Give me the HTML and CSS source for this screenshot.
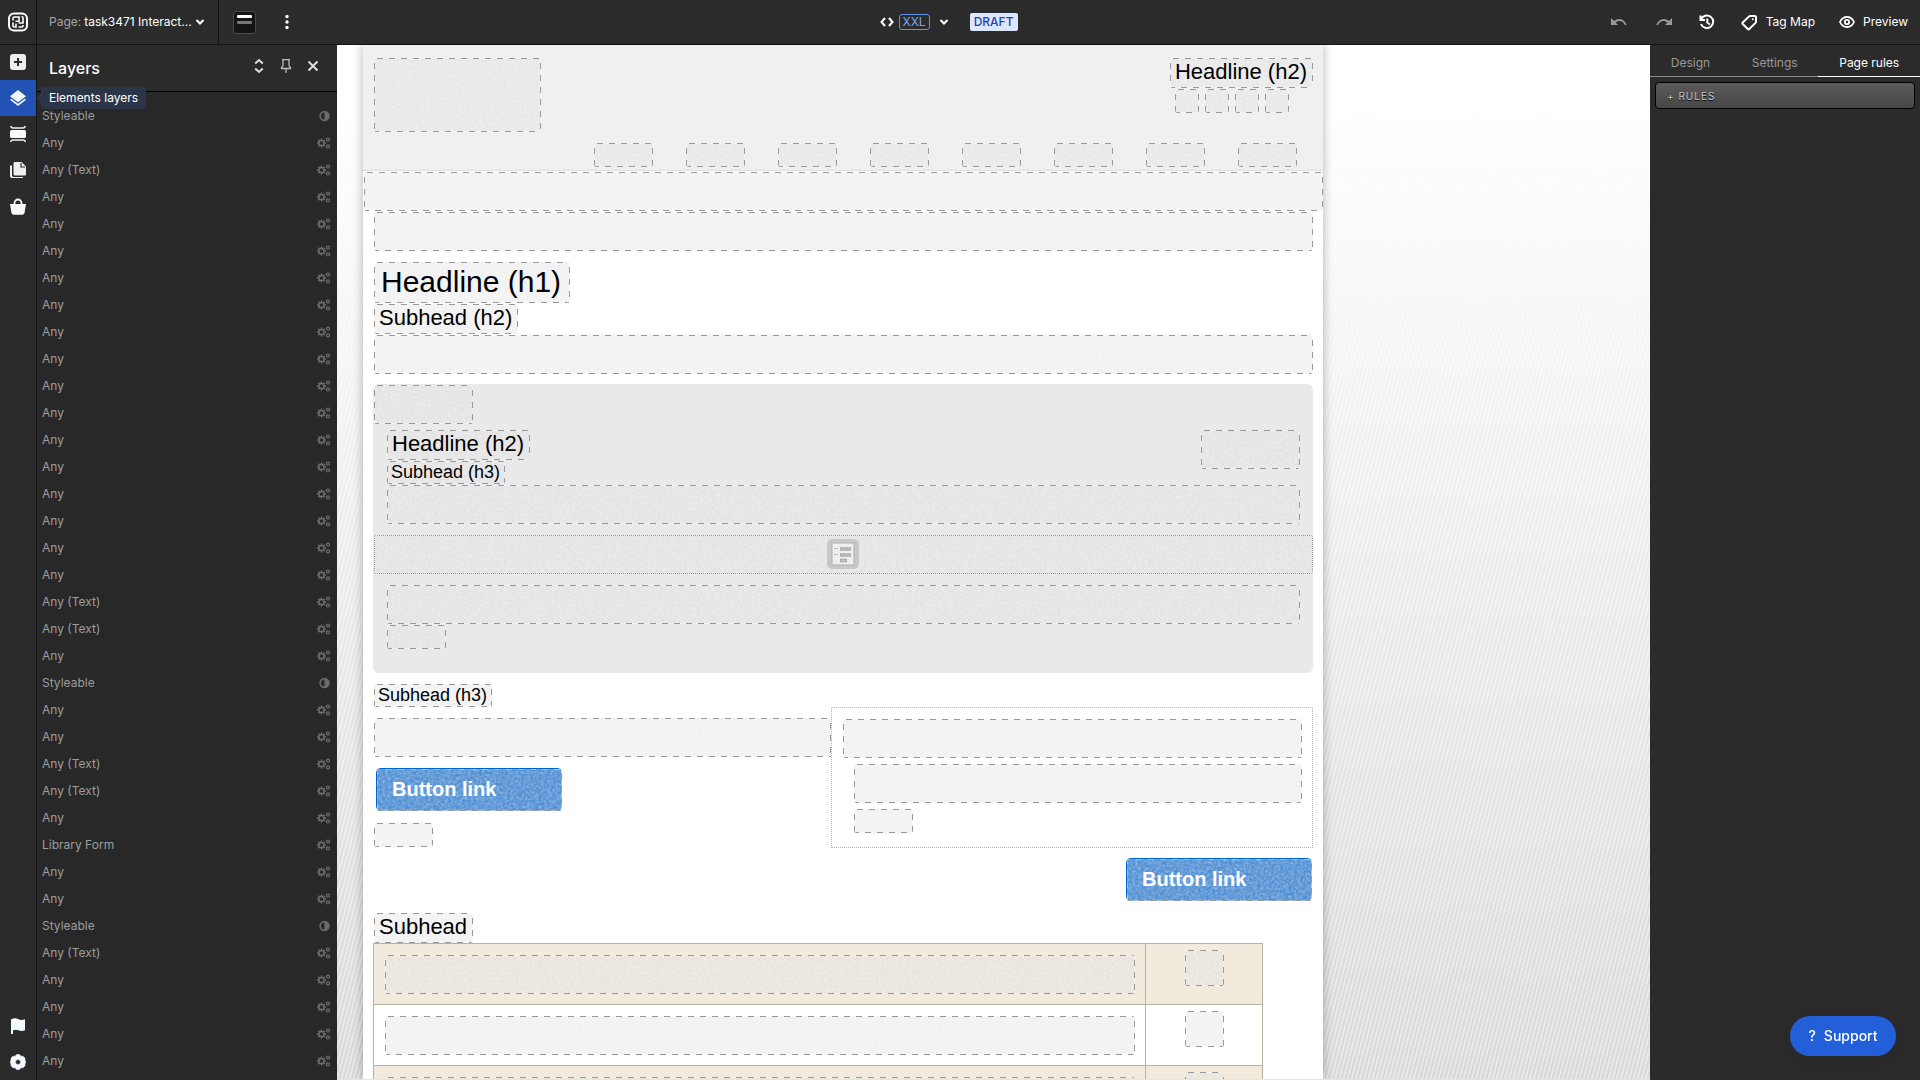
FILE: index.html
```
<!doctype html>
<html lang="en">
<head>
<meta charset="utf-8">
<title>Page editor</title>
<link rel="stylesheet" href="styles.css">
<script src="script.js" defer></script>
</head>

<body>
<svg class="sprite" aria-hidden="true">
	<symbol id="gears" viewBox="0 0 14 12">
		<circle cx="4.5" cy="6" r="2.6" fill="none" stroke="currentColor" stroke-width="1.5"/>
		<path d="M4.5 1.6v1.6M4.5 8.8v1.6M0 6h1.8M7.2 6h1.8M1.3 2.8l1.2 1.2M6.5 8l1.2 1.2M1.3 9.2L2.5 8M6.5 4l1.2-1.2" stroke="currentColor" stroke-width="1.5"/>
		<circle cx="11" cy="2.6" r="1.5" fill="none" stroke="currentColor" stroke-width="1.2"/>
		<circle cx="11" cy="9.4" r="1.5" fill="none" stroke="currentColor" stroke-width="1.2"/>
		<path d="M9 1.4l.8.5M13 1.4l-.8.5M9 3.8l.8-.5M13 3.8l-.8-.5M9 8.2l.8.5M13 8.2l-.8.5M9 10.6l.8-.5M13 10.6l-.8-.5" stroke="currentColor"/>
	</symbol>
	<symbol id="contrast" viewBox="0 0 14 12">
		<circle cx="7.5" cy="6" r="4.4" fill="none" stroke="currentColor" stroke-width="1.6"/>
		<path d="M7.5 1.6a4.4 4.4 0 0 1 0 8.8z" fill="currentColor"/>
	</symbol>
	<symbol id="chevron" viewBox="0 0 10 8">
		<path d="M1.5 2l3.5 3.5L8.500 2" fill="none" stroke="currentColor" stroke-width="2"/>
	</symbol>
</svg>

<header class="topbar">
	<div class="topLeft">
		<a href="#" class="logo" aria-label="Home">
			<svg width="20" height="20" viewBox="0 0 20 20" fill="none" stroke="#fff">
				<rect x="1" y="1.500" width="18" height="17" rx="5" stroke-width="2"/>
				<path d="M5 8.500V6.200C5 5.400 5.400 5 6.200 5H11v4.300H7.500M5 10.500v3.200c0 .9.400 1.300 1.300 1.300H8v-3.500M13.500 4.800h.5c.7 0 1 .4 1 1v5.200h-4.500M10.500 15h3.500c.7 0 1-.4 1-1v-1" stroke-width="1.600"/>
			</svg>
		</a>
		<button class="pageSelect">
			<span class="muted">Page:</span>
			<span class="pageName">task3471 Interact...</span>
			<svg width="10" height="8"><use href="#chevron"/></svg>
		</button>
		<button class="viewBtn" aria-label="Header view"><i class="on"></i><i></i></button>
		<button class="iconBtn dots" aria-label="More">
			<svg width="4" height="16" viewBox="0 0 4 16" fill="#fff"><circle cx="2" cy="2.500" r="1.700"/><circle cx="2" cy="8" r="1.700"/><circle cx="2" cy="13.500" r="1.700"/></svg>
		</button>
	</div>
	<div class="topMid">
		<svg width="14" height="10" viewBox="0 0 14 10" fill="none" stroke="#fff" stroke-width="2"><path d="M5 1L1.500 5 5 9M9 1l3.500 4L9 9"/></svg>
		<button class="sizeBtn"><span class="size">XXL</span><svg width="10" height="8"><use href="#chevron"/></svg></button>
		<span class="draft">DRAFT</span>
	</div>
	<div class="topRight">
		<button class="iconBtn undo" aria-label="Undo">
			<svg width="16" height="10" viewBox="0 0 16 10"><path d="M0 1v7h7L4.600 5.600C7.500 3 12 3.500 14 8.300l1.700-.6C13.200 1.500 7 .3 3.100 4.100z" fill="#999"/></svg>
		</button>
		<button class="iconBtn redo" aria-label="Redo">
			<svg width="16" height="10" viewBox="0 0 16 10"><path d="M16 1v7H9l2.400-2.400C8.500 3 4 3.500 2 8.300L.3 7.700C2.800 1.500 9 .3 12.900 4.100z" fill="#999"/></svg>
		</button>
		<button class="iconBtn history" aria-label="History">
			<svg width="16" height="16" viewBox="0 0 16 16" fill="none" stroke="#fff" stroke-width="2"><path d="M1.500 1.500V6H6M2 5.500A6.300 6.300 0 1 1 2 10M8.300 4.500v4l2.700 2"/></svg>
		</button>
		<button class="textBtn">
			<svg width="17" height="17" viewBox="0 0 17 17" fill="none" stroke="#fff" stroke-width="2" stroke-linejoin="round"><path d="M9.500 2h4.300c.8 0 1.200.4 1.200 1.200v4.600c0 .5-.2.8-.5 1.100L8.300 15c-.5.500-1 .5-1.500 0L1.700 10c-.5-.5-.5-1 0-1.500L8 2.500c.5-.4.900-.5 1.500-.5z"/><circle cx="11.800" cy="5.200" r="1" fill="#fff" stroke="none"/></svg>
			Tag Map
		</button>
		<button class="textBtn">
			<svg width="16" height="14" viewBox="0 0 16 14" fill="none" stroke="#fff" stroke-width="1.800"><path d="M1 7c1.500-3.300 4-5 7-5s5.500 1.700 7 5c-1.500 3.300-4 5-7 5s-5.500-1.700-7-5z"/><circle cx="8" cy="7" r="2.200"/></svg>
			Preview
		</button>
	</div>
</header>

<div class="work">
	<nav class="rail">
		<button aria-label="Add element">
			<svg width="16" height="16" viewBox="0 0 16 16"><rect width="16" height="16" rx="3" fill="#eee"/><path d="M8 4v8M4 8h8" stroke="#2b2b2b" stroke-width="2"/></svg>
		</button>
		<button class="active" aria-label="Elements layers">
			<svg width="18" height="18" viewBox="0 0 18 18" fill="#f2f6ff"><path d="M9 1l8 6.200-8 6.100-8-6.100z"/><path d="M2.300 9.700L9 14.800l6.700-5.100L17 10.800 9 17l-8-6.200z"/></svg>
			<span class="tip">Elements layers</span>
		</button>
		<button aria-label="Sections">
			<svg width="16" height="18" viewBox="0 0 16 18" fill="none" stroke="#f2f2f2"><rect y="5" width="16" height="8" rx="1.500" fill="#f8f8f8" stroke="none"/><path d="M.5 1c.5 1.600 1 2 2.500 2h10c1.500 0 2-.4 2.500-2M.5 17c.5-1.600 1-2 2.500-2h10c1.500 0 2 .4 2.500 2" stroke-width="1.500"/></svg>
		</button>
		<button aria-label="Pages">
			<svg width="16" height="18" viewBox="0 0 16 18" fill="#eee"><path d="M5 1h6.500L16 5.500V13c0 1-.6 1.500-1.500 1.500H5c-1 0-1.500-.6-1.500-1.500V2.500C3.500 1.600 4 1 5 1z"/><path d="M11 2v4h4" fill="none" stroke="#2b2b2b" stroke-width="1.200"/><path d="M0 4.500h2V14c0 1.200.8 2 2 2h9v1H2c-1.300 0-2-.7-2-2z"/></svg>
		</button>
		<button aria-label="Shop">
			<svg width="16" height="17" viewBox="0 0 16 17"><path d="M0 6h16l-1.400 8.600c-.3 1.400-1 2.100-2.300 2.100H3.700c-1.300 0-2-.7-2.300-2.100z" fill="#f8faff"/><path d="M4.500 8V5a3.500 3.500 0 0 1 7 0v3" fill="none" stroke="#f8faff" stroke-width="1.800"/></svg>
		</button>
		<span class="spacer"></span>
		<button aria-label="Report">
			<svg width="14" height="16" viewBox="0 0 14 16"><path d="M0 1.500C3 0 5 0 7.500 1.300c2 .9 4 .9 6.500 0v11c-2.500 1-4.500 1-6.500 0-2-.8-3.500-.8-5.500 0V16H0z" fill="#f4faff"/></svg>
		</button>
		<button aria-label="Settings">
			<svg width="16" height="16" viewBox="0 0 16 16" fill="#f4faff"><path fill-rule="evenodd" d="M6 1l2-1 2 1 .8 1.200 2.200 0L14.900 4l.1 2 .8 2-.8 2-.1 2-1.900 1.800-2.200 0L10 15l-2 1-2-1-.8-1.200-2.200 0L1.100 12 1 10 .2 8 1 6l.1-2L3 2.200l2.200 0zM8 5.500a2.500 2.500 0 1 0 0 5 2.500 2.500 0 0 0 0-5z" stroke="#f4faff" stroke-linejoin="round" stroke-width=".5"/></svg>
		</button>
	</nav>

	<aside class="layers">
		<div class="layersHead">
			<h2>Layers</h2>
			<button class="iconBtn" aria-label="Expand all">
				<svg width="10" height="16" viewBox="0 0 10 16" fill="none" stroke="#ddd" stroke-width="2"><path d="M1.200 5.500L5 2l3.800 3.500M1.200 10.500L5 14l3.800-3.500"/></svg>
			</button>
			<button class="iconBtn" aria-label="Pin">
				<svg width="12" height="14" viewBox="0 0 12 14" fill="none" stroke="#bbb"><path d="M2 .7h8M3 1v6M9 1v6M1.500 9.500v-1L3 7M10.500 9.500v-1L9 7M1 9.500h10M6 9.500V14" stroke-width="1.300"/></svg>
			</button>
			<button class="iconBtn" aria-label="Close">
				<svg width="12" height="12" viewBox="0 0 12 12" fill="none" stroke="#ddd" stroke-width="2"><path d="M1.500 1.500l9 9M10.500 1.500l-9 9"/></svg>
			</button>
		</div>
		<ul class="layerList" id="layerList"></ul>
	</aside>

	<main class="canvas">
		<div class="sheet">
			<div class="siteHead">
				<div class="brandRow">
					<div class="ph brand"></div>
					<div class="headRight">
						<h2 class="ph h2">Headline (h2)</h2>
						<div class="socials">
							<div class="ph"></div><div class="ph"></div><div class="ph"></div><div class="ph"></div>
						</div>
					</div>
				</div>
				<div class="menu">
					<div class="ph small"></div><div class="ph small"></div><div class="ph small"></div><div class="ph small"></div><div class="ph small"></div><div class="ph small"></div><div class="ph small"></div><div class="ph small"></div>
				</div>
			</div>
			<div class="ph bar wide"></div>
			<div class="content">
				<div class="ph bar"></div>
				<h1 class="ph h1">Headline (h1)</h1>
				<h2 class="ph h2">Subhead (h2)</h2>
				<div class="ph bar"></div>

				<section class="box">
					<div class="ph bar chip"></div>
					<div class="boxHead">
						<div class="titles">
							<h2 class="ph h2">Headline (h2)</h2>
							<h3 class="ph h3">Subhead (h3)</h3>
						</div>
						<div class="ph bar chip"></div>
					</div>
					<div class="ph bar inset"></div>
					<div class="ph bar formBar">
						<svg width="32" height="30" viewBox="0 0 32 30">
							<rect width="32" height="30" rx="5" fill="#c8c8c8"/>
							<rect x="5" y="4" width="22" height="22" fill="#eee" stroke="#b0b0b0"/>
							<path d="M7 9.500h4M7 15.500h4" stroke="#bbb"/>
							<path d="M13 10h11M13 16h11M13 21.500h7" stroke="#aaa" stroke-width="3.500"/>
							<path d="M14 10h9M14 16h9M14 21.500h5" stroke="#c6c6c6"/>
						</svg>
					</div>
					<div class="ph bar inset"></div>
					<div class="ph small inset"></div>
				</section>

				<h3 class="ph h3 after">Subhead (h3)</h3>
				<div class="cols">
					<div class="colLeft">
						<div class="ph bar"></div>
						<a href="#" class="btnLink"><span class="ph">Button link</span></a>
						<div class="ph small"></div>
					</div>
					<div class="colRight">
						<div class="ph bar"></div>
						<div class="ph bar sub"></div>
						<div class="ph small sub"></div>
					</div>
				</div>
				<a href="#" class="btnLink right"><span class="ph">Button link</span></a>
				<h2 class="ph h2">Subhead</h2>
				<table class="grid">
					<tr><td><div class="ph bar"></div></td><td class="thumb"><div class="ph"></div></td></tr>
					<tr><td><div class="ph bar"></div></td><td class="thumb"><div class="ph"></div></td></tr>
					<tr><td><div class="ph bar"></div></td><td class="thumb"><div class="ph"></div></td></tr>
				</table>
			</div>
		</div>
	</main>

	<aside class="side">
		<div class="tabs">
			<button>Design</button><button>Settings</button><button class="active">Page rules</button>
		</div>
		<button class="rules">+ RULES</button>
	</aside>
</div>

<button class="support"><span>?</span>Support</button>
</body>
</html>
```

FILE: styles.css
```
*{ box-sizing:border-box;}
body{ margin:0; height:100vh; overflow:hidden; display:flex; flex-direction:column; background:#2b2b2b; color:#fff; font:12px/16px Inter,"Liberation Sans",sans-serif;}
h1,h2,h3,ul{ margin:0; padding:0; font-weight:normal;}
button{ margin:0; padding:0; border:0; background:none; color:inherit; font:inherit; cursor:pointer;}
a{ color:inherit; text-decoration:none;}
svg{ display:block; flex:none;}
.sprite{ position:absolute; width:0; height:0;}

/* top bar */
.topbar{ position:relative; z-index:2; flex:none; display:flex; height:44px; background:#2b2b2b; box-shadow:0 1px #121212;}
.topLeft,.topMid,.topRight{ display:flex; align-items:center;}
.topLeft,.topRight{ flex:1;}
.logo{ display:flex; align-items:center; justify-content:center; width:37px; height:44px; border-right:1px solid #141414;}
.pageSelect{ display:flex; align-items:center; gap:3px; width:182px; height:44px; padding-left:12px; border-right:1px solid #141414; font-size:12px; white-space:nowrap;}
.muted{ color:#a5a5a5;}
.viewBtn{ display:flex; flex-direction:column; align-items:center; gap:3px; width:23px; height:23px; margin-left:14px; padding-top:3px; background:#141414; border:1px solid #4a4a4a; border-radius:3px;}
.viewBtn i{ width:15px; height:3px; border-radius:1px; background:#777;}
.viewBtn .on{ background:#fff;}
.iconBtn{ display:flex; align-items:center; justify-content:center; width:16px; height:24px;}
.dots{ margin-left:23px;}
.topMid{ gap:5px; padding-right:11px;}
.sizeBtn{ display:flex; align-items:center; gap:9px;}
.size{ padding:0 3px; border:1px solid #5f92f0; border-radius:3px; color:#7ba6f7; line-height:14px;}
.draft{ margin-left:16px; padding:0 4px; border-radius:2px; background:#dbe6ff; color:#1f45a5; font-weight:500; line-height:18px;}
.topRight{ justify-content:flex-end; padding-right:12px;}
.redo{ margin-left:29px;}
.history{ margin:0 26px 0 27px;}
.textBtn{ display:flex; align-items:center; gap:8px;}
.textBtn + .textBtn{ margin-left:24px;}

.work{ flex:1; display:flex; min-height:0;}

/* left rail */
.rail{ flex:none; display:flex; flex-direction:column; width:37px; border-right:1px solid #141414;}
.rail button{ position:relative; display:flex; align-items:center; justify-content:center; height:36px;}
.rail .active{ background:#2352b5;}
.spacer{ flex:1;}
.tip{ position:absolute; z-index:3; left:41px; top:7px; padding:3px 8px; border-radius:2px; background:#2c3547; white-space:nowrap;}
.tip:before{ content:""; position:absolute; left:-5px; top:6px; border:5px solid transparent; border-left-width:0; border-right-color:#2c3547;}

/* layers panel */
.layers{ flex:none; display:flex; flex-direction:column; width:300px; background:#282828;}
.layersHead{ flex:none; display:flex; align-items:center; gap:11px; height:48px; padding:0 16px 4px 12px; background:#2b2b2b; border-bottom:1px solid #000;}
.layersHead h2{ flex:1; padding-top:4px; font-size:16px; line-height:24px; font-weight:500;}
.layerList{ flex:1; padding-top:10px; overflow:hidden; list-style:none; color:#9d9d9d;}
.layerList li{ display:flex; align-items:center; justify-content:space-between; height:27px; padding:0 6px 0 5px;}
.layerList svg{ width:14px; height:12px; color:#6b6b6b;}

/* canvas */
.canvas{ flex:1; min-width:0; overflow:hidden; padding-left:26px; border-bottom:1px solid #e4e4e4;
	background:linear-gradient(#fff 6%,rgba(255,255,255,.55) 50%,rgba(255,255,255,.1)),repeating-linear-gradient(105deg,#ebebeb 0,#cecece 2px,#ebebeb 4px);}
.sheet{ width:100%; max-width:960px; height:100%; overflow:hidden; background:#fff; color:#000; box-shadow:0 0 10px rgba(0,0,0,.3); font-family:"Liberation Sans",Arial,sans-serif;}

/* placeholder: dashed frame over a grainy fill */
.ph{ border-radius:3px; background:
	linear-gradient(90deg,#989898 50%,rgba(255,255,255,.4) 0) 3px 0/12px 1px repeat-x,
	linear-gradient(90deg,#989898 50%,rgba(255,255,255,.4) 0) -1px 100%/12px 1px repeat-x,
	linear-gradient(#989898 50%,rgba(255,255,255,.4) 0) 0 5px/1px 12px repeat-y,
	linear-gradient(#989898 50%,rgba(255,255,255,.4) 0) 100% 5px/1px 12px repeat-y,
	url("data:image/svg+xml,%3Csvg xmlns='http://www.w3.org/2000/svg' width='200' height='200'%3E%3Cfilter id='n'%3E%3CfeTurbulence type='fractalNoise' baseFrequency='.35' numOctaves='2' stitchTiles='stitch'/%3E%3CfeColorMatrix values='0 0 0 0 .87 0 0 0 0 .87 0 0 0 0 .87 .5 0 0 0 -.2'/%3E%3C/filter%3E%3Crect width='200' height='200' filter='url(%23n)'/%3E%3C/svg%3E"),
	url("data:image/svg+xml,%3Csvg xmlns='http://www.w3.org/2000/svg' width='180' height='180'%3E%3Cfilter id='n'%3E%3CfeTurbulence type='fractalNoise' baseFrequency='.35' numOctaves='2' seed='4' stitchTiles='stitch'/%3E%3CfeColorMatrix values='0 0 0 0 1 0 0 0 0 1 0 0 0 0 1 .6 0 0 0 -.22'/%3E%3C/filter%3E%3Crect width='180' height='180' filter='url(%23n)'/%3E%3C/svg%3E"),
	rgba(218,218,218,.36);}
.bar{ height:39px;}
.small{ width:59px; height:24px;}
.chip{ width:99px;}
.h1,.h2,.h3{ width:fit-content;}
.h1{ padding:0 9px 1px 7px; font-size:30px; line-height:40px;}
.h2{ padding:0 6px 3px 5px; font-size:22px; line-height:27px;}
.h3{ padding:0 5px 0 4px; font-size:18px; line-height:23px;}

.siteHead{ height:127px; padding:14px 10px 0 11px; background:#f0f0f0; border-bottom:1px solid #dcdcdc;}
.brandRow{ display:flex; justify-content:space-between;}
.brand{ width:167px; height:74px;}
.socials{ display:flex; gap:6px; padding:1px 0 0 5px;}
.socials .ph{ width:24px; height:24px;}
.menu{ display:flex; justify-content:flex-end; gap:33px; padding:11px 16px 0 0;}
.wide{ margin:1px 0 1px 1px;}
.content{ display:flow-root; padding:0 10px 0 11px;}
.content > .h1{ margin:11px 0 1px;}
.content > .h2 + .bar{ margin-top:1px;}

.box{ margin:10px 0 11px -1px; padding:1px 0 24px; border-radius:6px; background:#e9e9e9;}
.box > .chip{ margin-left:1px;}
.boxHead{ display:flex; justify-content:space-between; margin:6px 13px 1px 14px;}
.boxHead .h3{ margin-top:1px;}
.box .inset{ margin-left:14px; margin-right:13px; margin-bottom:1px;}
.box .small.inset{ margin-bottom:0;}
.formBar{ display:flex; align-items:center; justify-content:center; margin:11px 0 11px 1px; padding:0 2px 2px 0;}
.box .formBar{ background-size:2px 1px,2px 1px,1px 2px,1px 2px,auto,auto,auto;}

.cols{ display:grid; grid-template-columns:457fr 482fr;}
.colLeft{ padding-top:11px;}
.colLeft .bar{ border-top-right-radius:0; border-bottom-right-radius:0;}
.colLeft .btnLink{ margin:11px 0 12px 2px;}
.colRight{ display:flex; flex-direction:column; height:141px; padding:11px 10px 0 11px; border:1px dotted #b5b5b5;}
.colRight .sub{ margin:6px 0 0 11px;}
.btnLink{ display:block; width:186px; height:43px; padding:1px 0 0 1px; border-radius:5px; background:#0064d0; color:#fff; font-size:20px; font-weight:bold;}
.btnLink .ph{ display:block; height:42px; padding-left:15px; line-height:41px;}
.right{ margin:10px 1px 12px auto;}

.grid{ width:calc(100% - 49px); margin-left:-1px; border-collapse:collapse; table-layout:fixed;}
.grid td{ padding:11px 10px 10px 11px; border:1px solid #b7b3a0; vertical-align:top;}
.grid tr:nth-child(odd){ background:#f1eadd;}
.grid .thumb{ width:117px; padding:6px 0 0;}
.thumb .ph{ width:39px; height:36px; margin:0 auto;}

/* right panel */
.side{ flex:none; width:270px;}
.tabs{ display:flex; height:33px; color:#999;}
.tabs button{ flex:auto; padding-top:6px; border-bottom:1px solid #8a8a8a;}
.tabs .active{ color:#fff; border-color:#fff;}
.rules{ display:block; width:260px; height:27px; margin:5px; padding-left:11px; text-align:left; border:1px solid #000; border-radius:4px; background:linear-gradient(#5a5a5a,#474747); color:#ccc; font-size:10px; letter-spacing:1px; text-shadow:0 1px #000;}

.support{ position:fixed; z-index:5; right:24px; bottom:24px; display:flex; align-items:center; justify-content:center; gap:8px; width:106px; height:40px; border-radius:20px; background:#225fd9; font-size:14px; font-weight:500; box-shadow:0 4px 24px rgba(0,0,0,.1);}
```

FILE: script.js
```
var names=['Styleable','Any','Any (Text)'];
for(var i=0; i<15; i++){
	names.push('Any');
}
names=names.concat([
	'Any (Text)','Any (Text)','Any','Styleable','Any','Any','Any (Text)','Any (Text)','Any',
	'Library Form','Any','Any','Styleable','Any (Text)','Any','Any','Any','Any'
]);

var oList=document.getElementById('layerList');
var html='';
for(var i=0; i<names.length; i++){
	var icon=names[i]=='Styleable'?'contrast':'gears';
	html+='<li><span>'+names[i]+'</span><svg><use href="#'+icon+'"/></svg></li>';
}
oList.innerHTML=html;
```
